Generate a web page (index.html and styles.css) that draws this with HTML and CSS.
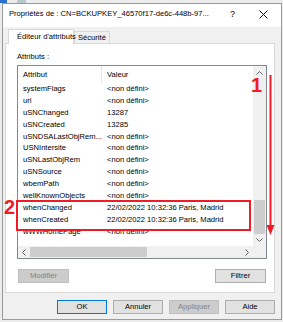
FILE: index.html
```html
<!DOCTYPE html>
<html lang="fr">
<head>
  <meta charset="UTF-8" />
  <title>Propriétés de : CN=BCKUPKEY</title>
  <link rel="stylesheet" href="styles.css">
</head>
<body>

<div class="desk"><span class="desk-blue"></span><span class="desk-grey"></span></div>

<div class="window">
  <div class="titlebar">
    <span class="title">Propriétés de : CN=BCKUPKEY_46570f17-de6c-448b-97...</span>
    <span class="tb-btn help">?</span>
    <span class="tb-btn close">
      <svg width="9" height="9" viewBox="0 0 9 9"><path d="M0.5 0.5 L8.5 8.5 M8.5 0.5 L0.5 8.5" stroke="#111" stroke-width="1" fill="none"/></svg>
    </span>
  </div>

  <div class="content">
    <div class="tabs">
      <div class="tab active">Éditeur d'attributs</div>
      <div class="tab">Sécurité</div>
    </div>

    <div class="panel">
      <div class="label">Attributs :</div>

      <div class="listbox">
        <div class="list">
          <div class="row head"><span class="c1">Attribut</span><span class="c2">Valeur</span></div>
          <div class="row"><span class="c1">systemFlags</span><span class="c2">&lt;non défini&gt;</span></div>
          <div class="row"><span class="c1">url</span><span class="c2">&lt;non défini&gt;</span></div>
          <div class="row"><span class="c1">uSNChanged</span><span class="c2">13287</span></div>
          <div class="row"><span class="c1">uSNCreated</span><span class="c2">13285</span></div>
          <div class="row"><span class="c1">uSNDSALastObjRem...</span><span class="c2">&lt;non défini&gt;</span></div>
          <div class="row"><span class="c1">USNIntersite</span><span class="c2">&lt;non défini&gt;</span></div>
          <div class="row"><span class="c1">uSNLastObjRem</span><span class="c2">&lt;non défini&gt;</span></div>
          <div class="row"><span class="c1">uSNSource</span><span class="c2">&lt;non défini&gt;</span></div>
          <div class="row"><span class="c1">wbemPath</span><span class="c2">&lt;non défini&gt;</span></div>
          <div class="row"><span class="c1">wellKnownObjects</span><span class="c2">&lt;non défini&gt;</span></div>
          <div class="row"><span class="c1">whenChanged</span><span class="c2">22/02/2022 10:32:36 Paris, Madrid</span></div>
          <div class="row"><span class="c1">whenCreated</span><span class="c2">22/02/2022 10:32:36 Paris, Madrid</span></div>
          <div class="row"><span class="c1">wWWHomePage</span><span class="c2">&lt;non défini&gt;</span></div>
        </div>

        <div class="vscroll">
          <span class="arr"><svg width="7" height="4" viewBox="0 0 7 4"><path d="M0.5 3.5 L3.5 0.5 L6.5 3.5" stroke="#606060" fill="none"/></svg></span>
          <span class="track"></span>
          <span class="thumb"></span>
          <span class="arr down"><svg width="7" height="4" viewBox="0 0 7 4"><path d="M0.5 0.5 L3.5 3.5 L6.5 0.5" stroke="#606060" fill="none"/></svg></span>
        </div>
        <div class="hscroll">
          <span class="arr"><svg width="4" height="7" viewBox="0 0 4 7"><path d="M3.5 0.5 L0.5 3.5 L3.5 6.5" stroke="#606060" fill="none"/></svg></span>
          <span class="thumb"></span>
          <span class="track"></span>
          <span class="arr"><svg width="4" height="7" viewBox="0 0 4 7"><path d="M0.5 0.5 L3.5 3.5 L0.5 6.5" stroke="#606060" fill="none"/></svg></span>
        </div>
        <div class="corner"></div>
      </div>

      <div class="panel-btns">
        <button disabled>Modifier</button>
        <button>Filtrer</button>
      </div>
    </div>

    <div class="dlg-btns">
      <button class="default">OK</button>
      <button>Annuler</button>
      <button disabled>Appliquer</button>
      <button>Aide</button>
    </div>
  </div>
</div>

<!-- annotations rouges -->
<div class="mark-box"></div>
<div class="mark-num one">1</div>
<div class="mark-num two">2</div>
<svg class="mark-arrow" width="12" height="164" viewBox="0 0 12 164">
  <rect x="4.5" y="1" width="2" height="152" fill="#ee1c25"/>
  <polygon points="1.5,151 9.5,151 5.5,161" fill="#ee1c25"/>
</svg>

</body>
</html>
```

FILE: styles.css
```css
body {
  margin: 0;
  width: 283px;
  height: 322px;
  overflow: hidden;
  position: relative;
  background: #ececec;
  font-family: "Liberation Sans", Arial, sans-serif;
  font-size: 7.6px;
  color: #000;
}

/* bout de bureau visible en haut */
.desk {
  position: absolute;
  top: 0;
  left: 0;
  height: 3px;
  display: flex;
}

.desk-blue {
  width: 7px;
  background: #2a6fc9;
}

.desk-grey {
  width: 9px;
  margin-left: 10px;
  background: #b9c7cf;
}

/* Fenêtre */
.window {
  margin: 3px 0 0 2px;
  width: 280px;
  height: 317px;
  box-sizing: border-box;
  border: 1px solid #9a9a9a;
  background: #f0f0f0;
  display: flex;
  flex-direction: column;
}

.titlebar {
  height: 23px;
  flex-shrink: 0;
  background: #fff;
  display: flex;
  align-items: flex-start;
  padding: 5px 2px 0 0;
  box-sizing: border-box;
  line-height: 10px;
}

.title {
  flex: 1;
  padding-left: 6px;
  white-space: nowrap;
  overflow: hidden;
}

.tb-btn {
  width: 31px;
  text-align: center;
}

.help {
  font-size: 9px;
}

.close svg {
  display: block;
  margin: 1px auto 0;
}

.content {
  flex: 1;
  padding: 2px 6px 0 2px;
  display: flex;
  flex-direction: column;
}

/* Onglets */
.tabs {
  display: flex;
  align-items: flex-end;
  height: 14px;
  margin-left: 3px;
}

.tab {
  height: 12px;
  box-sizing: border-box;
  border: 1px solid #d9d9d9;
  border-bottom: none;
  background: #f0f0f0;
  padding: 0 3px 0 3px;
  line-height: 11px;
  white-space: nowrap;
}

.tab.active {
  height: 15px;
  width: 66px;
  margin-bottom: -1px;
  padding-left: 8px;
  line-height: 13px;
  background: #fff;
  position: relative;
  z-index: 1;
}

.panel {
  height: 250px;
  box-sizing: border-box;
  border: 1px solid #d9d9d9;
  background: #fff;
  padding: 0 7px 0 11px;
}

.label {
  margin-top: 8px;
  line-height: 10px;
  margin-bottom: 3px;
}

/* Liste des attributs */
.listbox {
  height: 194px;
  box-sizing: border-box;
  border: 1px solid #828790;
  display: grid;
  grid-template-columns: 1fr 13px;
  grid-template-rows: 1fr 12px;
}

.list {
  overflow: hidden;
}

.row {
  display: flex;
  height: 11.875px;
  line-height: 11.875px;
  white-space: nowrap;
}

.row.head {
  height: 17px;
  line-height: 17px;
}

.c1 {
  width: 84px;
  flex-shrink: 0;
  box-sizing: border-box;
  padding-left: 5px;
}

.head .c1 {
  border-right: 1px solid #e5e5e5;
}

.c2 {
  padding-left: 5px;
}

.vscroll, .hscroll, .corner {
  background: #f0f0f0;
  display: flex;
}

.vscroll {
  flex-direction: column;
}

.arr {
  display: flex;
  align-items: center;
  justify-content: center;
  flex-shrink: 0;
}

.vscroll .arr {
  height: 13px;
}

.vscroll .arr.down {
  height: 12px;
}

.vscroll .thumb {
  height: 34px;
  margin: 0 1px;
  background: #cdcdcd;
}

.track {
  flex: 1;
}

.hscroll .arr {
  width: 12px;
}

.hscroll .thumb {
  width: 117px;
  margin: 1px 0;
  background: #cdcdcd;
}

/* Boutons */
button {
  font-family: inherit;
  font-size: inherit;
  color: #000;
  width: 50px;
  height: 14px;
  padding: 0;
  line-height: 12px;
  border: 1px solid #adadad;
  background: #e1e1e1;
}

button:disabled {
  background: #cccccc;
  border-color: #bfbfbf;
  color: #838383;
}

button.default {
  border-color: #0078d7;
}

.panel-btns {
  display: flex;
  justify-content: space-between;
  margin-top: 10px;
  padding: 0 1px;
}

.panel-btns button {
  width: 51px;
}

.dlg-btns {
  display: flex;
  justify-content: flex-end;
  gap: 6px;
  margin-top: 7px;
}

/* Annotations */
.mark-box {
  position: absolute;
  left: 16px;
  top: 200px;
  width: 235px;
  height: 31px;
  box-sizing: border-box;
  border: 2px solid #ee1c25;
}

.mark-num {
  position: absolute;
  color: #ee1c25;
  font-weight: bold;
  font-size: 20px;
  line-height: 1;
}

.mark-num.one {
  left: 251px;
  top: 75px;
}

.mark-num.two {
  left: 4px;
  top: 197px;
}

.mark-arrow {
  position: absolute;
  left: 265px;
  top: 74px;
}
```
